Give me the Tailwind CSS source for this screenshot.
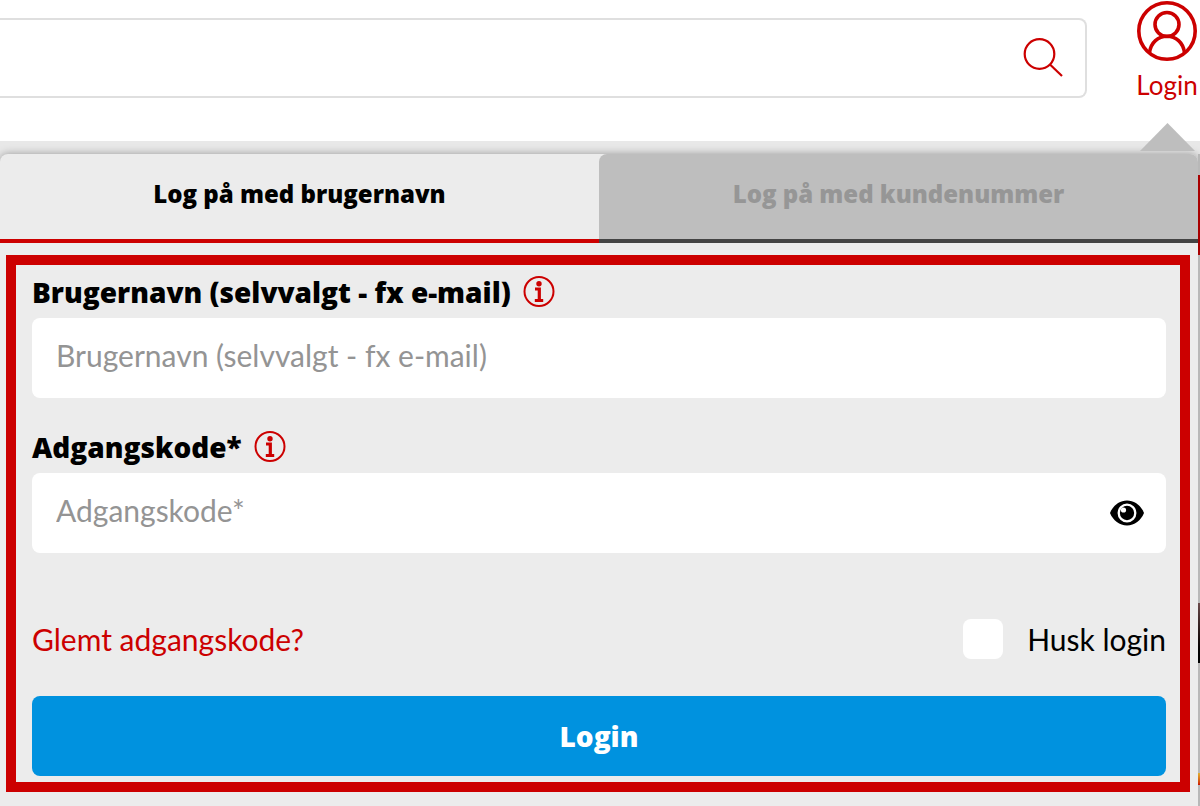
<!DOCTYPE html>
<html lang="da">

<head>
    <meta charset="UTF-8">
    <meta name="viewport" content="width=device-width, initial-scale=1.0">
    <title>Login</title>
    <script src="https://cdn.jsdelivr.net/npm/@tailwindcss/browser@4"></script>
</head>

<body class="flex min-h-screen flex-col overflow-x-hidden bg-[#e8e8e8] font-['Lato',sans-serif] text-[30px] leading-8 text-black">
    <header class="flex h-[141px] items-start bg-white pr-[3px]">
        <form class="mt-[18px] mr-[50px] flex h-20 flex-1 items-center rounded-r-lg border-2 border-l-0 border-[#dfdfdf] pr-[22px]" role="search">
            <input type="search" aria-label="Søg" class="h-full min-w-0 flex-1 pl-6 outline-none">
            <button type="submit" aria-label="Søg">
                <svg class="size-10" viewBox="0 0 40 40" fill="none" stroke="#cc0000" stroke-width="2.200">
                    <circle cx="16.500" cy="16" r="14.800" />
                    <path d="M27 26.500 39 38" />
                </svg>
            </button>
        </form>
        <div class="relative">
            <a href="#" class="flex w-[60px] flex-col items-center text-[26px] text-[#cc0000]">
                <svg class="mt-px mb-2 size-[60px] shrink-0" viewBox="0 0 60 60" fill="none" stroke="#cc0000" stroke-width="3.600">
                    <circle cx="30" cy="30" r="28.200" />
                    <circle cx="30" cy="23.500" r="12" />
                    <path d="M12.500 51.500C14 41.500 21 35.300 30 35.300S46 41.500 47.500 51.500" />
                </svg>
                Login
            </a>
            <svg class="absolute top-[123px] left-[3px] z-10 h-7 w-[55px]" viewBox="0 0 55 28">
                <path d="M27.500 0 55 28H0z" fill="#bebebe" />
            </svg>
        </div>
    </header>

    <div class="flex flex-1 pt-[13px]">
        <main class="flex-1 rounded-t-lg bg-[#ececec] shadow-[0_0_8px_rgba(0,0,0,0.35)]">
            <div class="grid grid-cols-2 font-['Open_Sans',sans-serif] text-2xl font-extrabold" role="tablist">
                <button type="button" role="tab" aria-selected="true" class="h-[89px] border-b-4 border-[#cc0000] pb-1.5">Log på med brugernavn</button>
                <button type="button" role="tab" aria-selected="false" class="h-[89px] rounded-t-lg border-b-4 border-[#444444] bg-[#bebebe] pb-1.5 text-[#969696]">Log på med kundenummer</button>
            </div>

            <form class="mt-3 mr-2 ml-1.5 border-10 border-[#cc0000] pr-3.5 pb-1.5 pl-4">
                <div class="flex h-[53px] items-center gap-3">
                    <label for="username" class="font-['Open_Sans',sans-serif] text-[28px] font-extrabold">Brugernavn (selvvalgt - fx e-mail)</label>
                    <button type="button" aria-label="Info om brugernavn">
                        <svg class="size-8" viewBox="0 0 32 32" fill="none" stroke="#cc0000">
                            <circle cx="16" cy="15.500" r="14.500" stroke-width="2" />
                            <circle cx="16" cy="7.800" r="2.700" fill="#cc0000" stroke="none" />
                            <path d="M12 13H16.300V24M11.800 24.500H20.200" stroke-width="3.200" />
                        </svg>
                    </button>
                </div>
                <input id="username" type="text" placeholder="Brugernavn (selvvalgt - fx e-mail)" class="block h-20 w-full rounded-lg bg-white px-6 pb-1.5 outline-none placeholder:text-[#949494]">

                <div class="mt-[22px] flex h-[53px] items-center gap-3">
                    <label for="password" class="font-['Open_Sans',sans-serif] text-[28px] font-extrabold">Adgangskode*</label>
                    <button type="button" aria-label="Info om adgangskode">
                        <svg class="size-8" viewBox="0 0 32 32" fill="none" stroke="#cc0000">
                            <circle cx="16" cy="15.500" r="14.500" stroke-width="2" />
                            <circle cx="16" cy="7.800" r="2.700" fill="#cc0000" stroke="none" />
                            <path d="M12 13H16.300V24M11.800 24.500H20.200" stroke-width="3.200" />
                        </svg>
                    </button>
                </div>
                <div class="flex h-20 items-center rounded-lg bg-white pr-[22px]">
                    <input id="password" type="password" placeholder="Adgangskode*" class="h-full min-w-0 flex-1 px-6 pb-1.5 outline-none placeholder:text-[#949494]">
                    <button type="button" aria-label="Vis adgangskode">
                        <svg class="h-[26px] w-[34px]" viewBox="0 0 34 26">
                            <path d="M0 13C3 5.500 9.500.5 17 .5S31 5.500 34 13C31 20.500 24.500 25.500 17 25.500S3 20.500 0 13z" />
                            <circle cx="17" cy="13" r="8.300" fill="none" stroke="white" stroke-width="2.300" />
                            <circle cx="13.500" cy="10" r="2.600" fill="white" />
                        </svg>
                    </button>
                </div>

                <div class="mt-[66px] flex h-10 items-center justify-between">
                    <a href="#" class="text-[#cc0000]">Glemt adgangskode?</a>
                    <label class="flex items-center gap-6">
                        <input type="checkbox" class="size-10 appearance-none rounded-lg bg-white">
                        Husk login
                    </label>
                </div>

                <button type="submit" class="mt-[37px] h-20 w-full rounded-lg bg-[#0092df] font-['Open_Sans',sans-serif] text-[28px] font-extrabold text-white">Login</button>
            </form>
        </main>

        <!-- page edge behind the panel -->
        <div class="flex w-0.5 flex-col bg-[#b8b8b8] pt-[21px]">
            <div class="h-20 bg-[#a80000]"></div>
            <div class="mt-[348px] h-[60px] bg-linear-to-b from-[#6b4a4a] to-black"></div>
            <div class="mt-[110px] h-3 bg-linear-to-b from-[#e0b030] to-[#cc0000]"></div>
        </div>
    </div>
</body>

</html>
